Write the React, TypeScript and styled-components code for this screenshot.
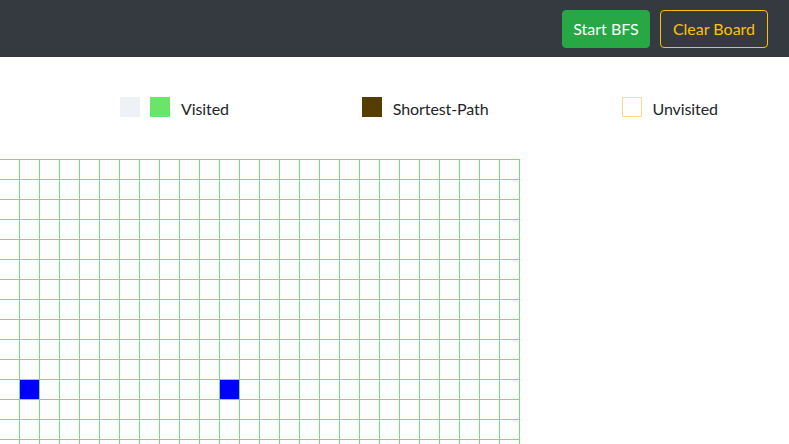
import React from "react";
import styled, { createGlobalStyle } from "styled-components";

const GlobalStyle = createGlobalStyle`
  html, body {
    margin: 0;
    padding: 0;
    overflow: hidden;
    background: #ffffff;
    font-family: Lato, "Noto Sans", "Liberation Sans", sans-serif;
    color: #212529;
  }
`;

const NavBar = styled.nav`
  height: 57px;
  background: #343a40;
  display: flex;
  align-items: center;
  justify-content: flex-end;
  gap: 10px;
  padding-right: 21px;
  box-sizing: border-box;
`;

const Button = styled.button<{ $variant: "success" | "outline"; $width: number }>`
  width: ${(p) => p.$width}px;
  height: 38px;
  padding: 0;
  font-family: inherit;
  font-size: 16px;
  border-radius: 4px;
  cursor: pointer;
  box-sizing: border-box;
  background: ${(p) => (p.$variant === "success" ? "#28a745" : "transparent")};
  color: ${(p) => (p.$variant === "success" ? "#ffffff" : "#ffc107")};
  border: 1px solid ${(p) => (p.$variant === "success" ? "#28a745" : "#ffc107")};
`;

const Legend = styled.div`
  display: flex;
  align-items: center;
  gap: 133px;
  margin-top: 40px;
  padding-left: 120px;
  height: 20px;
`;

const LegendItem = styled.div`
  display: flex;
  align-items: center;
  gap: 10px;
`;

const Swatch = styled.span<{ $color: string; $border?: string }>`
  display: block;
  width: 20px;
  height: 20px;
  box-sizing: border-box;
  background: ${(p) => p.$color};
  border: ${(p) => (p.$border ? `1px solid ${p.$border}` : "none")};
`;

const Label = styled.span`
  font-size: 16px;
  line-height: 20px;
  margin-left: 1px;
  margin-top: 4px;
  letter-spacing: -0.1px;
`;

const Board = styled.div`
  margin-top: 42px;
  margin-left: -1px;
  display: grid;
  grid-template-columns: repeat(26, 19px);
  grid-auto-rows: 19px;
  gap: 1px;
  padding: 1px;
  width: fit-content;
  background: #76df76;
`;

const Cell = styled.div<{ $wall: boolean }>`
  background: ${(p) => (p.$wall ? "#0000ff" : "#ffffff")};
`;

const COLS = 26;
const ROWS = 15;
const walls = new Set(["11-1", "11-11"]);

export default function App() {
  const cells = [];
  for (let r = 0; r < ROWS; r++) {
    for (let c = 0; c < COLS; c++) {
      cells.push(<Cell key={`${r}-${c}`} $wall={walls.has(`${r}-${c}`)} />);
    }
  }
  return (
    <>
      <GlobalStyle />
      <NavBar>
        <Button $variant="success" $width={88}>Start BFS</Button>
        <Button $variant="outline" $width={108}>Clear Board</Button>
      </NavBar>
      <Legend>
        <LegendItem>
          <Swatch $color="#eef2f7" />
          <Swatch $color="#6be46b" />
          <Label>Visited</Label>
        </LegendItem>
        <LegendItem>
          <Swatch $color="#553d00" />
          <Label>Shortest-Path</Label>
        </LegendItem>
        <LegendItem>
          <Swatch $color="#ffffff" $border="#fbdb87" />
          <Label>Unvisited</Label>
        </LegendItem>
      </Legend>
      <Board>{cells}</Board>
    </>
  );
}
